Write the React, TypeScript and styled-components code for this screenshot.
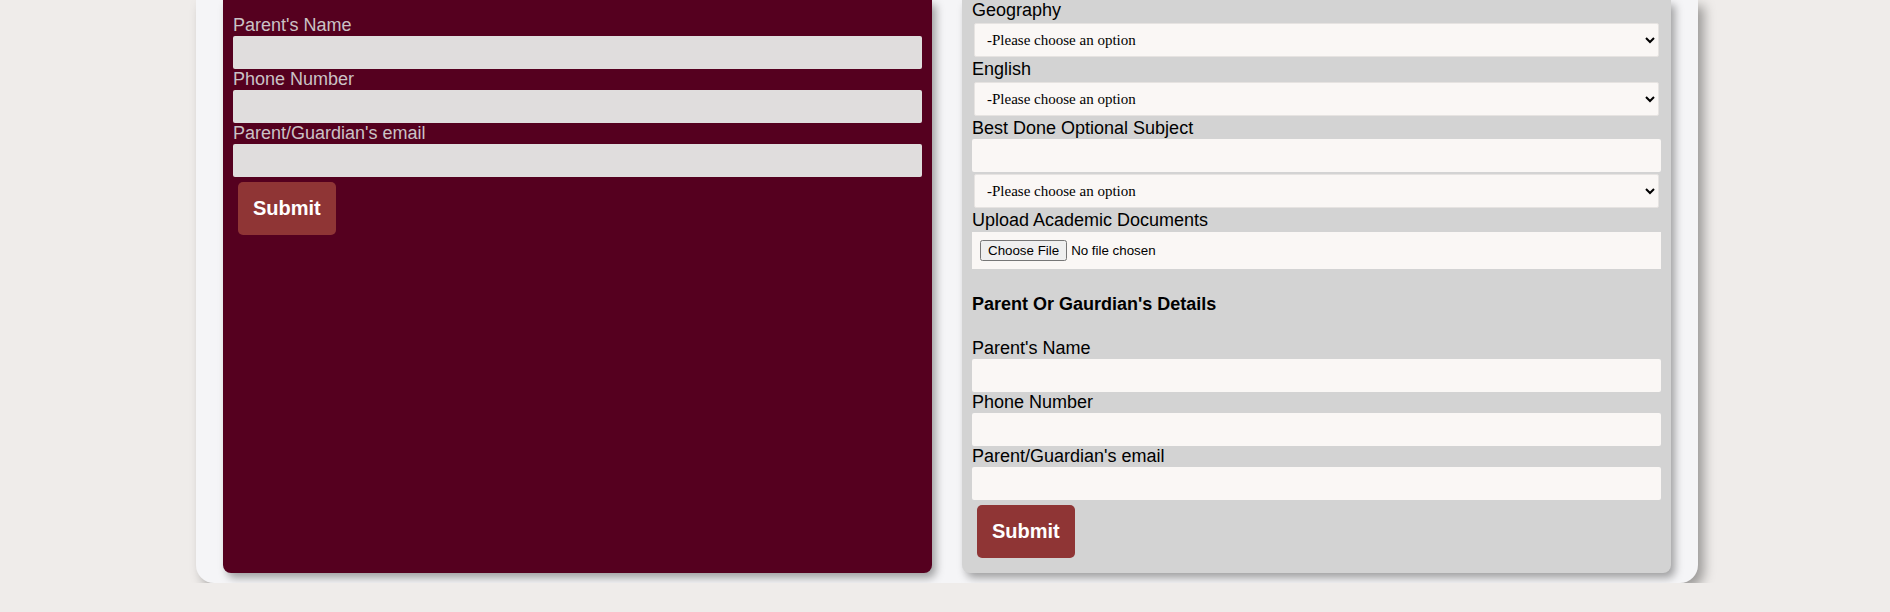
import React from "react";
import styled, { createGlobalStyle } from "styled-components";

const Global = createGlobalStyle`
  html, body { margin: 0; padding: 0; background: #efecea; }
  body { font-family: "Liberation Sans", Arial, sans-serif; overflow: hidden; }
  * { box-sizing: border-box; }
`;

const Card = styled.div`
  margin-left: 196px;
  width: 1502px;
  background: #f5f5f7;
  border-radius: 0 0 18px 18px;
  box-shadow: 6px 6px 12px rgba(0, 0, 0, 0.35);
  padding: 0 27px 10px;
  display: flex;
  gap: 30px;
  align-items: stretch;
`;

const Panel = styled.div<{ $dark?: boolean }>`
  flex: 1;
  display: flex;
  flex-direction: column;
  align-items: flex-start;
  background: ${(p) => (p.$dark ? "#55001f" : "#d3d3d3")};
  border-radius: 0 0 8px 8px;
  box-shadow: 4px 5px 8px rgba(0, 0, 0, 0.35);
  padding: ${(p) => (p.$dark ? "15px 10px 10px" : "0 10px 10px")};
`;

const Label = styled.label<{ $dark?: boolean }>`
  display: block;
  font-size: 18px;
  line-height: 21px;
  height: 21px;
  color: ${(p) => (p.$dark ? "#cbc2c5" : "#000")};
`;

const TextInput = styled.input<{ $dark?: boolean }>`
  display: block;
  width: 100%;
  height: 33px;
  border: none;
  border-radius: 2px;
  margin: 0;
  background: ${(p) => (p.$dark ? "#e0dddd" : "#faf7f5")};
  font-size: 16px;
  font-family: inherit;
`;

const Select = styled.select`
  display: block;
  width: calc(100% - 4px);
  height: 34px;
  margin: 2px;
  border: 1px solid #e6e3e1;
  border-radius: 2px;
  background-color: #faf7f5;
  padding: 0 8px;
  font-family: "Liberation Serif", "Times New Roman", serif;
  font-size: 15px;
  color: #000;
`;

const FileInput = styled.input`
  display: block;
  width: 100%;
  margin: 1px 0 0;
  padding: 8px;
  background: #faf7f5;
  border: none;
  font-size: 13.333px;
  font-family: "Liberation Sans", Arial, sans-serif;
`;

const Heading = styled.h3`
  margin: 24px 0 23px;
  font-size: 18px;
  line-height: 22px;
  font-weight: bold;
  color: #000;
`;

const SubmitButton = styled.button`
  margin: 5px;
  padding: 15px;
  border: none;
  border-radius: 5px;
  background: #8f3535;
  color: #fff;
  font-family: "Liberation Sans", Arial, sans-serif;
  font-weight: bold;
  font-size: 20px;
  line-height: 23px;
  cursor: pointer;
`;

const Field = styled.div`
  width: 100%;
`;

const OPTION = "-Please choose an option";

function ParentFields({ dark }: { dark?: boolean }) {
  return (
    <>
      <Field>
        <Label $dark={dark}>Parent's Name</Label>
        <TextInput $dark={dark} type="text" />
      </Field>
      <Field>
        <Label $dark={dark}>Phone Number</Label>
        <TextInput $dark={dark} type="tel" />
      </Field>
      <Field>
        <Label $dark={dark}>Parent/Guardian's email</Label>
        <TextInput $dark={dark} type="email" />
      </Field>
      <SubmitButton type="button">Submit</SubmitButton>
    </>
  );
}

function SubjectSelect() {
  return (
    <Select defaultValue="">
      <option value="">{OPTION}</option>
      <option value="a">A</option>
      <option value="b">B</option>
      <option value="c">C</option>
    </Select>
  );
}

export default function App() {
  return (
    <>
      <Global />
      <Card>
        <Panel $dark>
          <ParentFields dark />
        </Panel>
        <Panel>
          <Field>
            <Label>Geography</Label>
            <SubjectSelect />
          </Field>
          <Field>
            <Label>English</Label>
            <SubjectSelect />
          </Field>
          <Field>
            <Label>Best Done Optional Subject</Label>
            <TextInput type="text" />
            <SubjectSelect />
          </Field>
          <Field>
            <Label>Upload Academic Documents</Label>
            <FileInput type="file" />
          </Field>
          <Heading>Parent Or Gaurdian's Details</Heading>
          <ParentFields />
        </Panel>
      </Card>
    </>
  );
}
